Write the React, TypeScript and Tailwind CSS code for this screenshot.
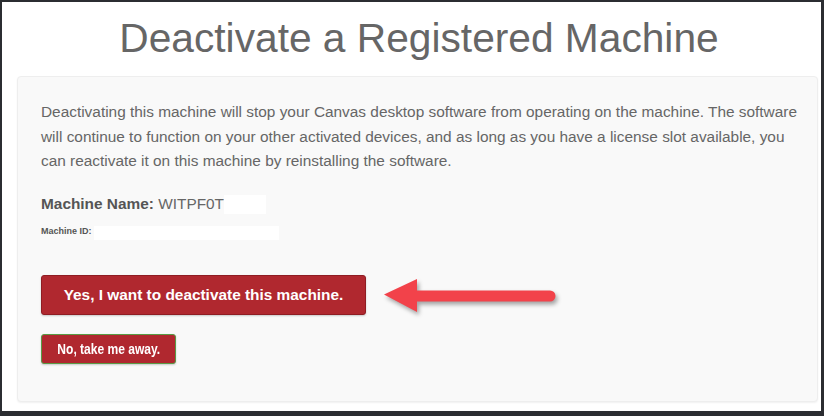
import React from 'react';

const font = { fontFamily: '"Liberation Sans", Arial, sans-serif' };

const Arrow: React.FC = () => (
    <svg width="182" height="42" viewBox="0 0 182 42" className="shrink-0" style={{ filter: 'drop-shadow(2px 3px 2px rgba(0,0,0,0.35))' }}>
        <line x1="30" y1="22" x2="167" y2="22" stroke="#f2424a" strokeWidth="11" strokeLinecap="round" />
        <polygon points="1,20.5 34,5 34,38" fill="#f2424a" />
    </svg>
);

const App: React.FC = () => {
    return (
        <div className="w-[824px] h-[416px] bg-[#2b2d31] pt-[2px] pl-[2px] pr-[3px] pb-[5px]" style={font}>
            <div className="h-full bg-white flex flex-col">
                {/* ---------------Title--------------- */}
                <h1 className="mt-[14px] pl-[15px] text-center text-[40.7px] leading-[44px] text-[#666666] font-normal">
                    Deactivate a Registered Machine
                </h1>

                {/* ---------------Card--------------- */}
                <div className="mt-[16px] ml-[15px] mr-[3px] bg-[#f9f9f9] border border-[#eeeeee] rounded-[4px] shadow-[0_1px_2px_rgba(0,0,0,0.06)] pt-[23px] pl-[23px] pr-[20px] pb-[37px]">
                    <p className="text-[15.4px] leading-[24.5px] text-[#666666]">
                        Deactivating this machine will stop your Canvas desktop software from operating on the machine. The software will continue to function on your other activated devices, and as long as you have a license slot available, you can reactivate it on this machine by reinstalling the software.
                    </p>

                    <div className="mt-[19.5px] flex items-center h-[22px] text-[15.4px] text-[#555555]">
                        <span className="font-bold whitespace-pre">Machine Name: </span>
                        <span className="text-[#666666]">WITPF0T</span>
                        <span className="inline-block w-[42px] h-[19px] bg-white"></span>
                    </div>

                    <div className="mt-[9px] flex items-start h-[14px]">
                        <span className="text-[9px] leading-[14px] font-bold text-[#555555]">Machine ID:</span>
                        <span className="ml-[2px] mt-[2px] inline-block w-[185px] h-[14px] bg-white"></span>
                    </div>

                    {/* ---------------Buttons--------------- */}
                    <div className="mt-[36px] flex items-center gap-[17px]">
                        <button
                            type="button"
                            className="w-[325px] h-[40px] bg-[#b0282f] border border-[#8f1d23] rounded-[3px] shadow-[0_1px_2px_rgba(0,0,0,0.2)] text-white font-bold text-[15.4px]"
                        >
                            Yes, I want to deactivate this machine.
                        </button>
                        <Arrow />
                    </div>

                    <button
                        type="button"
                        className="mt-[18px] w-[135px] h-[30px] bg-[#b0282f] border border-[#5a9a45] rounded-[3px] shadow-[0_1px_2px_rgba(0,0,0,0.2)] text-white font-bold text-[14px] flex items-center justify-center"
                    >
                        <span className="inline-block scale-x-[0.86] whitespace-nowrap">No, take me away.</span>
                    </button>
                </div>
            </div>
        </div>
    );
};

export default App;
